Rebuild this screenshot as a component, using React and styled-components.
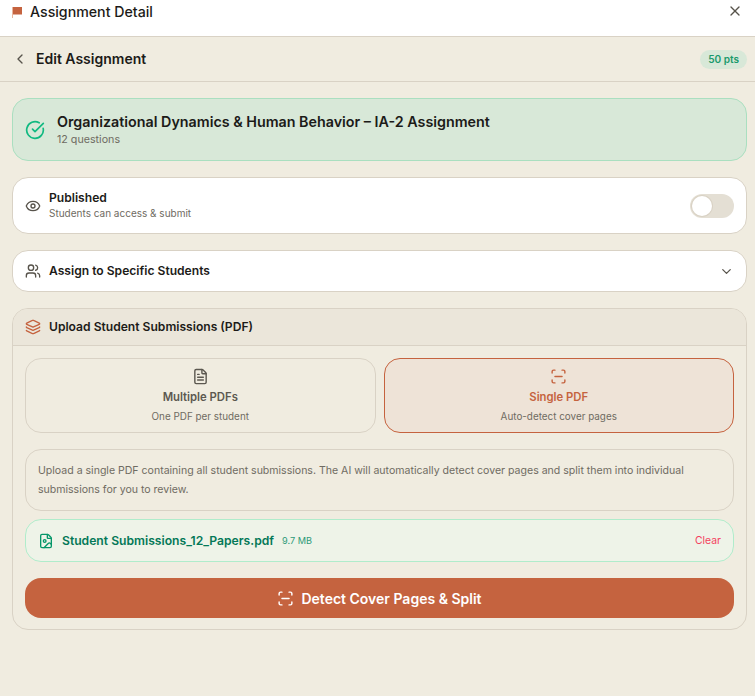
import React from "react";
import styled, { createGlobalStyle } from "styled-components";
import { ChevronDown, ChevronLeft, CircleCheckBig, Eye, FileImage, FileText, Layers, ScanLine, Users, X } from "lucide-react";

const GlobalStyle = createGlobalStyle`
  html, body {
    margin: 0;
    padding: 0;
    background: #f0ece0;
  }
  * {
    box-sizing: border-box;
  }
  body {
    font-family: "Inter", "Liberation Sans", sans-serif;
    color: #1c1b18;
  }
`;

const Page = styled.div`
  width: 755px;
  height: 696px;
  overflow: hidden;
  background: #f0ece0;
`;

const TopBar = styled.header`
  height: 37px;
  background: #fff;
  border-bottom: 1px solid #d9d2c5;
  display: flex;
  align-items: flex-start;
  justify-content: space-between;
  padding: 3px 12px 0 12px;
`;

const TopTitle = styled.div`
  display: flex;
  align-items: center;
  gap: 8px;
  font-size: 14.2px;
  font-weight: 500;
  line-height: 18px;
`;

const SubBar = styled.div`
  height: 45px;
  border-bottom: 1px solid #d9d2c5;
  display: flex;
  align-items: center;
  justify-content: space-between;
  padding: 0 8px 0 12px;
`;

const SubTitle = styled.div`
  display: flex;
  align-items: center;
  gap: 8px;
  font-size: 14px;
  font-weight: 600;
  line-height: 17px;
  padding-bottom: 1px;
`;

const Pill = styled.span`
  background: #d8e8d8;
  color: #1a9a6c;
  font-size: 10.1px;
  font-weight: 600;
  line-height: 19px;
  padding: 0 8px;
  border-radius: 10px;
`;

const Content = styled.main`
  padding: 16px 8px 0 12px;
  display: flex;
  flex-direction: column;
  gap: 16px;
`;

const Banner = styled.section`
  height: 63px;
  background: #d8e8d8;
  border: 1px solid #aadfc0;
  border-radius: 16px;
  display: flex;
  align-items: center;
  gap: 12px;
  padding: 0 12px;
`;

const BannerTitle = styled.div`
  font-size: 14.3px;
  font-weight: 600;
  line-height: 20px;
`;

const BannerSub = styled.div`
  font-size: 10.7px;
  line-height: 16px;
  color: #6f6b62;
`;

const Card = styled.section`
  height: ${(p) => p.$height}px;
  background: #fff;
  border: 1px solid #d9d2c5;
  border-radius: 16px;
  display: flex;
  align-items: center;
  gap: 8px;
  padding: 0 12px;
`;

const CardText = styled.div`
  flex: 1;
`;

const CardTitle = styled.div`
  font-size: 12.1px;
  font-weight: 600;
  line-height: 16px;
`;

const CardSub = styled.div`
  font-size: 10px;
  line-height: 15px;
  color: #6f6b62;
`;

const Toggle = styled.div`
  width: 44px;
  height: 24px;
  border-radius: 12px;
  background: #e4dfd4;
  padding: 2px;
`;

const Knob = styled.div`
  width: 20px;
  height: 20px;
  border-radius: 50%;
  background: #fff;
  box-shadow: 0 0 0 1px #d9d2c5;
`;

const UploadCard = styled.section`
  height: 322px;
  border: 1px solid #d9d2c5;
  border-radius: 16px;
  overflow: hidden;
`;

const UploadHeader = styled.div`
  height: 37px;
  background: #ebe6da;
  border-bottom: 1px solid #d9d2c5;
  display: flex;
  align-items: center;
  gap: 8px;
  padding: 0 12px;
`;

const UploadBody = styled.div`
  padding: 12px 12px 0;
  display: flex;
  flex-direction: column;
`;

const Modes = styled.div`
  display: grid;
  grid-template-columns: 1fr 1fr;
  gap: 8px;
`;

const Mode = styled.div`
  height: 75px;
  border: 1px solid ${(p) => (p.$active ? "#c5633f" : "#d9d2c5")};
  background: ${(p) => (p.$active ? "#eee3d7" : "transparent")};
  border-radius: 16px;
  display: flex;
  flex-direction: column;
  align-items: center;
  padding-top: 9px;
  color: ${(p) => (p.$active ? "#c5633f" : "#5c5850")};
`;

const ModeTitle = styled.div`
  font-size: 11.3px;
  font-weight: 600;
  line-height: 16px;
  margin-top: 4px;
`;

const ModeSub = styled.div`
  font-size: 9.9px;
  line-height: 14px;
  margin-top: 4px;
  color: #6f6b62;
`;

const Info = styled.p`
  height: 62px;
  margin: 16px 0 8px;
  border: 1px solid #d9d2c5;
  border-radius: 16px;
  padding: 11px 12px;
  font-size: 10.55px;
  line-height: 19px;
  color: #6f6b62;
`;

const FileRow = styled.div`
  height: 43px;
  background: #eef3e8;
  border: 1px solid #b0eccb;
  border-radius: 16px;
  display: flex;
  align-items: center;
  padding: 0 12px;
`;

const FileName = styled.span`
  font-size: 12.15px;
  font-weight: 600;
  color: #047857;
  margin-left: 8px;
`;

const FileSize = styled.span`
  font-size: 9.2px;
  color: #2f9a78;
  margin-left: 8px;
  flex: 1;
`;

const Clear = styled.span`
  font-size: 10.4px;
  color: #f43f5e;
`;

const DetectButton = styled.button`
  height: 40px;
  margin-top: 16px;
  border: none;
  border-radius: 16px;
  background: #c5633f;
  color: #fff;
  font-family: inherit;
  font-size: 14px;
  font-weight: 600;
  display: flex;
  align-items: center;
  justify-content: center;
  gap: 7px;
`;

// the flag in the title bar is a small solid pennant on a pale pole
function TitleFlag() {
  return (
    <svg width="10" height="11" viewBox="0 0 10 11" aria-hidden="true">
      <rect x="0" y="0" width="1" height="11" fill="#e8b79f" />
      <rect x="1" y="0" width="9" height="7.5" fill="#c5633f" />
    </svg>
  );
}

export default function App() {
  return (
    <Page>
      <GlobalStyle />
      <TopBar>
        <TopTitle>
          <TitleFlag />
          Assignment Detail
        </TopTitle>
        <X size={16} color="#57534b" />
      </TopBar>
      <SubBar>
        <SubTitle>
          <ChevronLeft size={16} color="#57534b" />
          Edit Assignment
        </SubTitle>
        <Pill>50 pts</Pill>
      </SubBar>
      <Content>
        <Banner>
          <CircleCheckBig size={20} color="#10b981" />
          <div>
            <BannerTitle>Organizational Dynamics &amp; Human Behavior – IA-2 Assignment</BannerTitle>
            <BannerSub>12 questions</BannerSub>
          </div>
        </Banner>
        <Card $height={57}>
          <Eye size={16} color="#57534b" />
          <CardText>
            <CardTitle>Published</CardTitle>
            <CardSub>Students can access &amp; submit</CardSub>
          </CardText>
          <Toggle>
            <Knob />
          </Toggle>
        </Card>
        <Card $height={42}>
          <Users size={16} color="#57534b" />
          <CardText>
            <CardTitle>Assign to Specific Students</CardTitle>
          </CardText>
          <ChevronDown size={15} color="#57534b" />
        </Card>
        <UploadCard>
          <UploadHeader>
            <Layers size={16} color="#c5633f" />
            <CardTitle>Upload Student Submissions (PDF)</CardTitle>
          </UploadHeader>
          <UploadBody>
            <Modes>
              <Mode>
                <FileText size={17} />
                <ModeTitle>Multiple PDFs</ModeTitle>
                <ModeSub>One PDF per student</ModeSub>
              </Mode>
              <Mode $active>
                <ScanLine size={17} />
                <ModeTitle>Single PDF</ModeTitle>
                <ModeSub>Auto-detect cover pages</ModeSub>
              </Mode>
            </Modes>
            <Info>
              Upload a single PDF containing all student submissions. The AI will automatically detect cover pages and
              split them into individual submissions for you to review.
            </Info>
            <FileRow>
              <FileImage size={16} color="#059669" />
              <FileName>Student Submissions_12_Papers.pdf</FileName>
              <FileSize>9.7 MB</FileSize>
              <Clear>Clear</Clear>
            </FileRow>
            <DetectButton>
              <ScanLine size={17} />
              Detect Cover Pages &amp; Split
            </DetectButton>
          </UploadBody>
        </UploadCard>
      </Content>
    </Page>
  );
}
